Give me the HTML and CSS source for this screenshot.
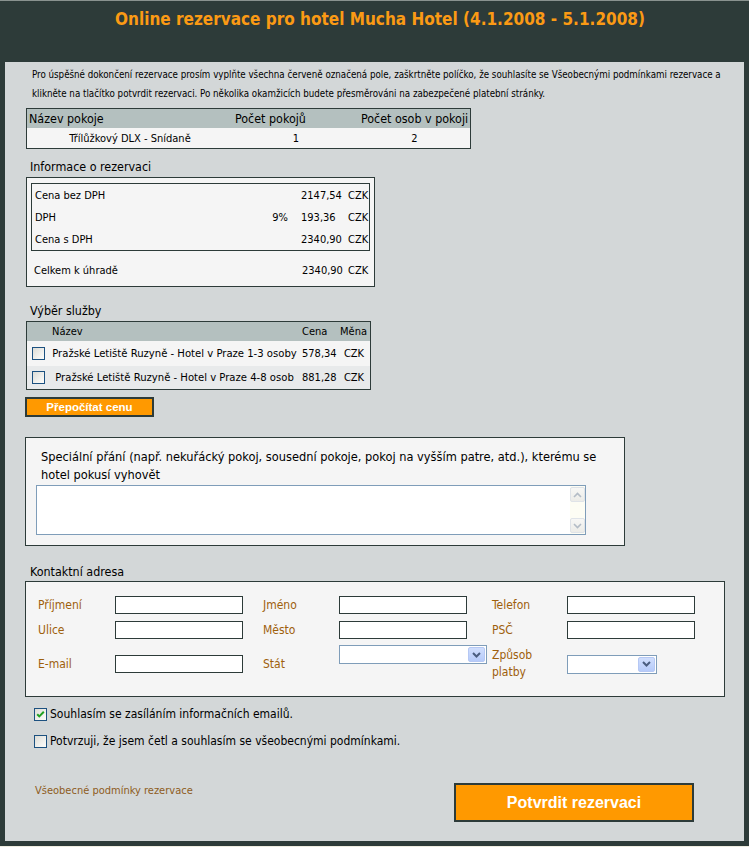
FILE: index.html
```html
<!DOCTYPE html>
<html lang="cs">
<head>
<meta charset="utf-8">
<title>Online rezervace – Mucha Hotel</title>
<link rel="stylesheet" href="styles.css">
</head>
<body>
<div class="page">
  <header class="top">
    <h1 class="title">Online rezervace pro hotel Mucha Hotel (4.1.2008 - 5.1.2008)</h1>
  </header>
  <main class="content">
    <p class="intro">Pro úspěšné dokončení rezervace prosím vyplňte všechna červeně označená pole, zaškrtněte políčko, že souhlasíte se Všeobecnými podmínkami rezervace a klikněte na tlačítko potvrdit rezervaci. Po několika okamžicích budete přesměrováni na zabezpečené platební stránky.</p>

    <table class="rooms">
      <thead>
        <tr><th class="c1">Název pokoje</th><th class="c2">Počet pokojů</th><th class="c3">Počet osob v pokoji</th></tr>
      </thead>
      <tbody>
        <tr><td>Třílůžkový DLX - Snídaně</td><td>1</td><td>2</td></tr>
      </tbody>
    </table>

    <h2 class="sect sect-info">Informace o rezervaci</h2>
    <div class="infobox">
      <div class="inner">
        <div class="irow"><span class="lab">Cena bez DPH</span><span class="pct"></span><span class="val">2147,54</span><span class="cur">CZK</span></div>
        <div class="irow"><span class="lab">DPH</span><span class="pct">9%</span><span class="val">193,36</span><span class="cur">CZK</span></div>
        <div class="irow"><span class="lab">Cena s DPH</span><span class="pct"></span><span class="val">2340,90</span><span class="cur">CZK</span></div>
      </div>
      <div class="total"><span class="lab">Celkem k úhradě</span><span class="val">2340,90</span><span class="cur">CZK</span></div>
    </div>

    <h2 class="sect sect-svc">Výběr služby</h2>
    <table class="services">
      <thead>
        <tr><th class="s0"></th><th class="s1">Název</th><th class="s2">Cena</th><th class="s3">Měna</th></tr>
      </thead>
      <tbody>
        <tr class="r1"><td class="cbcell"><span class="cb"></span></td><td class="name">Pražské Letiště Ruzyně - Hotel v Praze 1-3 osoby</td><td class="price">578,34</td><td class="cur">CZK</td></tr>
        <tr class="r2"><td class="cbcell"><span class="cb"></span></td><td class="name">Pražské Letiště Ruzyně - Hotel v Praze 4-8 osob</td><td class="price">881,28</td><td class="cur">CZK</td></tr>
      </tbody>
    </table>
    <button class="btn-small" type="button">Přepočítat cenu</button>

    <div class="special">
      <p class="special-text">Speciální přání (např. nekuřácký pokoj, sousední pokoje, pokoj na vyšším patre, atd.), kterému se hotel pokusí vyhovět</p>
      <div class="textarea">
        <div class="ta-body"></div>
        <div class="sb">
          <span class="sb-btn"><svg width="9" height="6" viewBox="0 0 9 6"><polyline points="1,5 4.5,1.5 8,5" fill="none" stroke="#b3bcc6" stroke-width="1.6"/></svg></span>
          <span class="sb-track"></span>
          <span class="sb-btn"><svg width="9" height="6" viewBox="0 0 9 6"><polyline points="1,1 4.5,4.5 8,1" fill="none" stroke="#b3bcc6" stroke-width="1.6"/></svg></span>
        </div>
      </div>
    </div>

    <h2 class="sect sect-contact">Kontaktní adresa</h2>
    <div class="contact">
      <label class="fl">Příjmení</label><span class="inp"></span>
      <label class="fl l2">Jméno</label><span class="inp"></span>
      <label class="fl l3">Telefon</label><span class="inp"></span>

      <label class="fl">Ulice</label><span class="inp"></span>
      <label class="fl l2">Město</label><span class="inp"></span>
      <label class="fl l3">PSČ</label><span class="inp"></span>

      <label class="fl">E-mail</label><span class="inp"></span>
      <label class="fl l2">Stát</label>
      <span class="sel sel-state"><span class="sel-btn"><svg width="9" height="6" viewBox="0 0 9 6"><polyline points="1,1 4.5,4.5 8,1" fill="none" stroke="#4a5d80" stroke-width="2"/></svg></span></span>
      <label class="fl l3">Způsob<br>platby</label>
      <span class="sel sel-pay"><span class="sel-btn"><svg width="9" height="6" viewBox="0 0 9 6"><polyline points="1,1 4.5,4.5 8,1" fill="none" stroke="#4a5d80" stroke-width="2"/></svg></span></span>
    </div>

    <div class="agree">
      <div class="arow"><span class="cb"><svg width="11" height="11" viewBox="0 0 11 11"><polyline points="2.2,5.2 4.3,7.4 8.8,2.8" fill="none" stroke="#21a121" stroke-width="2"/></svg></span><span>Souhlasím se zasíláním informačních emailů.</span></div>
      <div class="arow"><span class="cb"></span><span>Potvrzuji, že jsem četl a souhlasím se všeobecnými podmínkami.</span></div>
    </div>

    <div class="footer">
      <a class="terms" href="#">Všeobecné podmínky rezervace</a>
      <button class="btn-big" type="button">Potvrdit rezervaci</button>
    </div>
  </main>
</div>
</body>
</html>
```

FILE: styles.css
```css
* { box-sizing: border-box; }
html, body { margin: 0; padding: 0; }
body {
  background: #efede1;
  font-family: Tahoma, "DejaVu Sans Condensed", "DejaVu Sans", sans-serif;
  color: #000;
}
.page {
  width: 749px;
  background: #2d3b39;
  border-top: 1px solid #89928f;
  padding: 0 5px 5px;
}
.top { height: 61px; padding-top: 7px; padding-left: 11px; }
.title {
  margin: 0;
  text-align: center;
  color: #fb9a14;
  font-size: 17px;
  line-height: 22px;
  font-weight: bold;
}
.content {
  background: #d3d7d8;
  padding: 3px 20px 19px 20px;
}
.intro {
  margin: 0 0 5px;
  padding-left: 7px;
  font-size: 9.7px;
  line-height: 19px;
}

/* rooms table */
.rooms {
  margin-left: 1px;
  width: 445px;
  border: 1px solid #2d3b39;
  border-spacing: 0;
  font-size: 11px;
  table-layout: fixed;
}
.rooms th {
  background: #b4c0bf;
  font-weight: normal;
  font-size: 12.4px;
  text-align: left;
  height: 19px;
  padding: 0 2px;
  white-space: nowrap;
}
.rooms .c1 { width: 206px; }
.rooms .c2 { width: 126px; }
.rooms .c3 { width: 111px; padding: 0 0 0 2px; }
.rooms td {
  background: #f5f5f5;
  height: 20px;
  padding: 0;
  text-align: center;
}

.sect {
  margin: 10px 0 2px;
  padding-left: 5px;
  font-size: 12.4px;
  line-height: 16px;
  font-weight: normal;
}
.sect-svc { margin-top: 16px; }
.sect-contact { margin-top: 18px; margin-bottom: 1px; }

/* info box */
.infobox {
  margin-left: 1px;
  width: 349px;
  border: 1px solid #2d3b39;
  background: #f5f5f5;
  padding: 5px 4px;
  font-size: 11px;
}
.inner { border: 1px solid #2d3b39; }
.irow {
  display: grid;
  grid-template-columns: 1fr 41px 47px 21px;
  height: 22px;
  align-items: center;
}
.irow .lab { padding-left: 3px; }
.irow .pct { text-align: right; padding-right: 13px; }
.total {
  margin-top: 8px;
  display: grid;
  grid-template-columns: 1fr 46px 21px;
  height: 22px;
  align-items: center;
  padding: 0 1px 0 3px;
}

/* services table */
.services {
  margin-left: 1px;
  width: 345px;
  border: 1px solid #2d3b39;
  border-spacing: 0;
  font-size: 11px;
  table-layout: fixed;
}
.services th {
  background: #b4c0bf;
  font-weight: normal;
  text-align: left;
  height: 19px;
  padding: 0 0 0 2px;
  white-space: nowrap;
}
.services .s0 { width: 22px; }
.services .s1 { width: 251px; padding-left: 3px; }
.services .s2 { width: 38px; }
.services .s3 { width: 32px; }
.services td { padding: 0; white-space: nowrap; }
.services .name { font-size: 11.2px; text-align: center; }
.services .r1 td { background: #f5f5f5; height: 25px; }
.services .r2 td { background: #e8eaeb; height: 23px; }
.services .cbcell { padding-left: 5px; }
.services .cbcell .cb { display: block; }
.services .price { padding-left: 2px; }
.services .cur { text-align: center; }

.cb {
  display: inline-block;
  width: 13px;
  height: 13px;
  border: 1px solid #1c5180;
  background: linear-gradient(135deg, #dcdcd6 0%, #f4f4f1 70%, #fbfbf9 100%);
  vertical-align: middle;
}
.cb svg { display: block; }

.btn-small {
  display: block;
  margin-top: 7px;
  width: 129px;
  height: 20px;
  background: #ff9900;
  border: 2px solid #2d3b39;
  color: #fff;
  font-family: "Liberation Sans", Arial, sans-serif;
  font-weight: bold;
  font-size: 11.5px;
  line-height: 16px;
  padding: 0;
}

/* special wishes */
.special {
  margin-top: 20px;
  width: 600px;
  border: 1px solid #2d3b39;
  background: #f5f5f5;
  padding: 10px;
}
.special-text {
  margin: 0 0 1px;
  padding-left: 5px;
  font-size: 12.7px;
  line-height: 18px;
}
.textarea {
  display: flex;
  width: 550px;
  height: 50px;
  border: 1px solid #7f9db9;
  background: #fff;
}
.ta-body { flex: 1; }
.sb {
  width: 15px;
  display: flex;
  flex-direction: column;
  background: #fdfdf4;
  padding: 1px 0;
}
.sb-btn {
  height: 15px;
  border: 1px solid #dfe3e8;
  border-radius: 2px;
  background: linear-gradient(#f7f7f5, #ecece8);
  display: flex;
  align-items: center;
  justify-content: center;
}
.sb-track { flex: 1; }

/* contact */
.contact {
  width: 700px;
  border: 1px solid #2d3b39;
  background: #f5f5f5;
  padding: 14px 29px 14px 12px;
  display: grid;
  grid-template-columns: 77px 128px 96px 128px 100px 128px;
  grid-template-rows: 18px 18px 36px;
  row-gap: 7px;
  align-items: center;
}
.fl {
  color: #9e600c;
  font-size: 12px;
  line-height: 17px;
}
.fl.l2 { padding-left: 20px; }
.fl.l3 { padding-left: 25px; }
.inp {
  display: block;
  width: 128px;
  height: 18px;
  border: 1px solid #2d3b39;
  background: #fff;
}
.sel {
  display: flex;
  justify-content: flex-end;
  height: 19px;
  border: 1px solid #7f9db9;
  background: #fff;
  padding: 1px;
}
.sel-state { width: 148px; align-self: start; margin-top: -1px; }
.sel-pay { width: 90px; }
.sel-btn {
  width: 17px;
  height: 15px;
  border: 1px solid #b6c8f4;
  border-radius: 2px;
  background: linear-gradient(#d0defd, #b6cbfa);
  display: flex;
  align-items: center;
  justify-content: center;
}

/* agreements */
.agree { padding-left: 9px; margin-top: 7px; }
.arow {
  display: flex;
  align-items: center;
  gap: 3px;
  height: 20px;
  font-size: 12px;
  margin-bottom: 7px;
}
.arow:last-child { margin-bottom: 0; }

/* footer */
.footer {
  margin-top: 32px;
  display: flex;
  justify-content: space-between;
  align-items: flex-start;
  padding: 0 30px 0 10px;
}
.terms {
  color: #8e5c22;
  font-size: 11px;
  line-height: 16px;
  text-decoration: none;
}
.btn-big {
  width: 240px;
  height: 39px;
  background: #ff9900;
  border: 2px solid #2d3b39;
  color: #fff;
  font-family: "Liberation Sans", Arial, sans-serif;
  font-weight: bold;
  font-size: 16px;
  padding: 0;
}
```
